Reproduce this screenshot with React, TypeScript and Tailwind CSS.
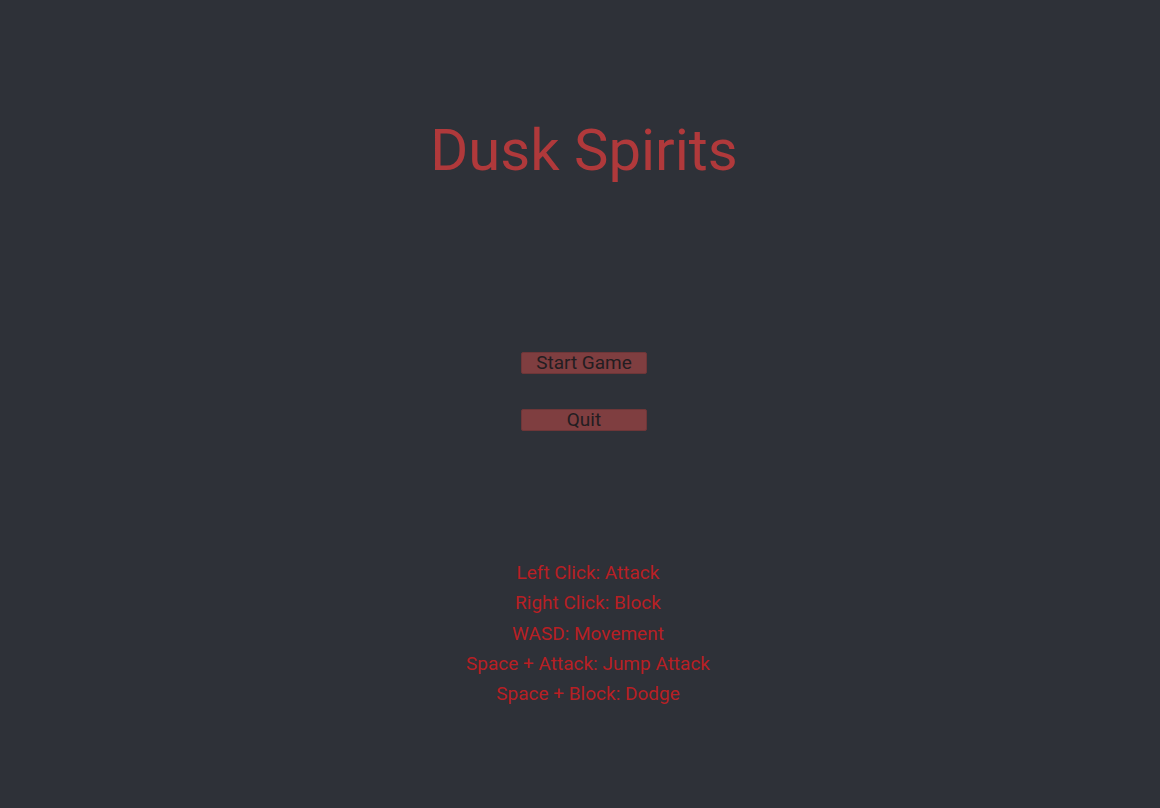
import React from 'react';

const controls = [
  'Left Click: Attack',
  'Right Click: Block',
  'WASD: Movement',
  'Space + Attack: Jump Attack',
  'Space + Block: Dodge',
];

const App: React.FC = () => {
  return (
    <div
      className="min-h-screen w-full bg-[#2e3138] flex flex-col items-center pt-[116px]"
      style={{ fontFamily: 'Roboto, "Noto Sans", sans-serif' }}
    >
      <h1 className="text-[58px] leading-[68px] text-[#b0393b] font-normal ml-[8px]">Dusk Spirits</h1>

      <div className="flex flex-col items-center gap-[35px] mt-[168px] ml-[8px]">
        <button className="w-[126px] h-[22px] bg-[#7f3e40] border border-[#6e3638] rounded-[2px] text-[#231d21] text-[19px] leading-[20px]">
          Start Game
        </button>
        <button className="w-[126px] h-[22px] bg-[#7f3e40] border border-[#6e3638] rounded-[2px] text-[#231d21] text-[19px] leading-[20px]">
          Quit
        </button>
      </div>

      <div className="flex flex-col items-center mt-[127px] ml-[16px]">
        {controls.map((c) => (
          <p key={c} className="text-[19px] leading-[30.3px] text-[#b81f24]">
            {c}
          </p>
        ))}
      </div>
    </div>
  );
};

export default App;
